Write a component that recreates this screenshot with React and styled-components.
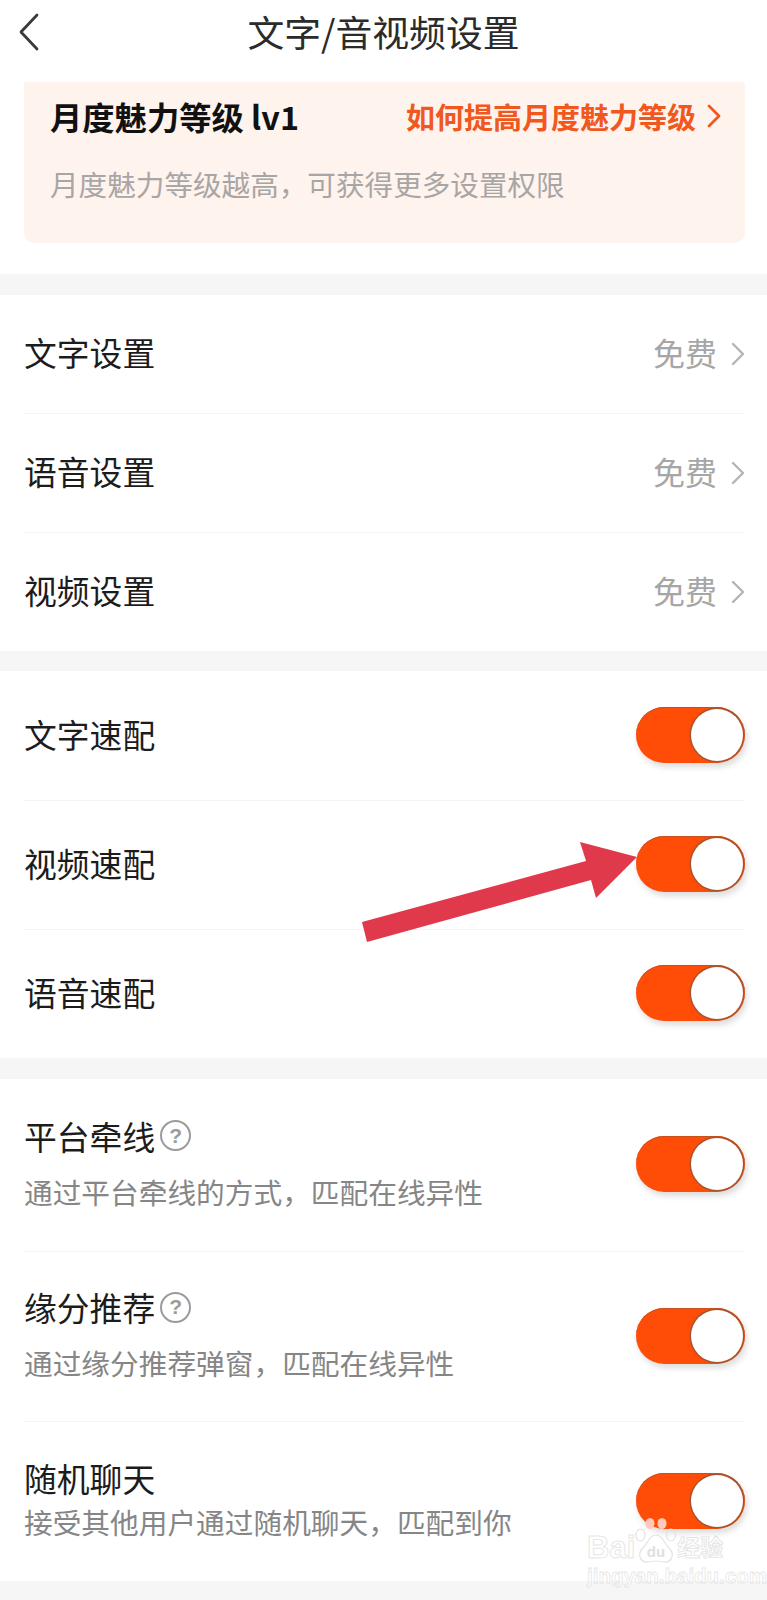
import React from "react";
import styled, { createGlobalStyle } from "styled-components";

const GlobalStyle = createGlobalStyle`
  html, body {
    margin: 0;
    padding: 0;
    background: #ffffff;
  }
  * {
    box-sizing: border-box;
  }
`;

const Page = styled.div`
  position: relative;
  width: 767px;
  height: 1600px;
  overflow: hidden;
  background: #ffffff;
  font-family: "Noto Sans CJK SC", "Liberation Sans", sans-serif;
  color: #1c1c1c;
`;

const Header = styled.header`
  height: 82px;
  display: flex;
  align-items: flex-start;
  justify-content: center;
  padding-top: 5px;
  position: relative;
`;

const BackButton = styled.button`
  position: absolute;
  left: 18px;
  top: 13px;
  width: 24px;
  height: 38px;
  padding: 0;
  border: none;
  background: none;
  color: #3a3a3a;
`;

const HeaderTitle = styled.h1`
  margin: 0;
  font-size: 36.8px;
  line-height: 52px;
  font-weight: 400;
  color: #2b2b2b;
`;

const LevelCard = styled.div`
  height: 161px;
  margin: 0 22px 31px 24px;
  padding: 12px 24px 0 26px;
  background: #fff3ee;
  border-radius: 3px 3px 10px 10px;
`;

const LevelTop = styled.div`
  display: flex;
  align-items: center;
  justify-content: space-between;
  height: 44px;
`;

const LevelName = styled.span`
  font-size: 32.3px;
  line-height: 44px;
  font-weight: 700;
  color: #111111;
`;

const LevelLink = styled.a`
  display: flex;
  align-items: center;
  gap: 11px;
  font-size: 29px;
  line-height: 44px;
  font-weight: 700;
  color: #f0581e;
`;

const LevelHint = styled.p`
  margin: 26px 0 0;
  font-size: 28.6px;
  line-height: 40px;
  color: #a8a6a5;
`;

const Band = styled.div`
  height: ${(props) => props.size || 21}px;
  background: #f6f6f6;
`;

const Section = styled.section`
  padding: 0 22px 0 24px;
`;

const Row = styled.div`
  height: ${(props) => props.height}px;
  display: flex;
  align-items: center;
  justify-content: space-between;
  border-bottom: ${(props) => (props.last ? "none" : "1px solid #f3f3f3")};
`;

const RowLabel = styled.span`
  font-size: 32.8px;
  line-height: 40px;
  color: #1c1c1c;
`;

const PlainLabel = styled(RowLabel)`
  padding-bottom: 4px;
`;

const RowValue = styled.span`
  display: flex;
  align-items: center;
  gap: 14px;
  font-size: 32px;
  line-height: 40px;
  color: #a6a6a6;
`;

const ValueText = styled.span`
  padding-bottom: 4px;
`;

const RowText = styled.div`
  display: flex;
  flex-direction: column;
  padding-bottom: 4px;
  gap: ${(props) => (props.tight ? 5 : 17)}px;
`;

const TitleLine = styled.div`
  display: flex;
  align-items: center;
  gap: 5px;
`;

const RowDesc = styled.span`
  font-size: 28.7px;
  line-height: 38px;
  color: #868686;
`;

const HelpMark = styled.span`
  width: 31px;
  height: 31px;
  display: flex;
  align-items: center;
  justify-content: center;
  border: 2px solid #9b9b9b;
  border-radius: 50%;
  font-family: "Liberation Sans", sans-serif;
  font-size: 21px;
  font-weight: 700;
  color: #9b9b9b;
`;

const Track = styled.div`
  width: 109px;
  height: 56px;
  margin-bottom: 2px;
  display: flex;
  align-items: center;
  justify-content: flex-end;
  padding-right: 2px;
  border-radius: 28px;
  background: #ff4d08;
  box-shadow: inset 0 1px 0 #c9501c, 2px 4px 6px rgba(0, 0, 0, 0.14);
`;

const Knob = styled.span`
  width: 52px;
  height: 52px;
  border-radius: 50%;
  background: #ffffff;
  box-shadow: 0 0 0 1.5px #a8532c;
`;

const ArrowMark = styled.svg`
  position: absolute;
  left: 0;
  top: 0;
  pointer-events: none;
`;

const Watermark = styled.div`
  position: absolute;
  left: 587px;
  top: 1518px;
  width: 140px;
  pointer-events: none;
`;

const BrandLine = styled.div`
  display: flex;
  align-items: flex-end;
  height: 46px;
`;

const BrandText = styled.span`
  font-family: "Liberation Sans", "Noto Sans CJK SC", sans-serif;
  font-size: ${(props) => props.size}px;
  line-height: 32px;
  font-weight: 700;
  color: rgba(255, 255, 255, 0.7);
  -webkit-text-stroke: 1px rgba(205, 205, 205, 0.5);
`;

const BrandUrl = styled.div`
  margin-top: 2px;
  font-family: "Liberation Sans", sans-serif;
  font-size: 20.5px;
  line-height: 20px;
  font-weight: 700;
  color: rgba(255, 255, 255, 0.7);
  -webkit-text-stroke: 0.8px rgba(205, 205, 205, 0.5);
  white-space: nowrap;
`;

const Chevron = ({ size = 14, height = 24, color = "#b5b5b5", weight = 2.4 }) => (
  <svg width={size} height={height} viewBox="0 0 14 24" fill="none" preserveAspectRatio="none">
    <path d="M2 2 L12 12 L2 22" stroke={color} strokeWidth={weight} strokeLinecap="round" strokeLinejoin="round" />
  </svg>
);

const Toggle = () => (
  <Track>
    <Knob />
  </Track>
);

const Paw = () => (
  <svg width="42" height="46" viewBox="0 0 42 46">
    <ellipse cx="15" cy="5.5" rx="4.5" ry="5.5" fill="#ffc9bc" />
    <ellipse cx="27" cy="5.5" rx="4.5" ry="5.5" fill="#ffc9bc" />
    <ellipse cx="5.5" cy="17" rx="4.5" ry="6" fill="none" stroke="#e2e2e2" strokeWidth="1.2" />
    <ellipse cx="36" cy="17" rx="4.5" ry="6" fill="none" stroke="#e2e2e2" strokeWidth="1.2" />
    <path
      d="M21 17 C28 17 29 26 35 31 C40 37 36 45 29 44 C25 43 17 43 13 44 C6 45 2 37 7 31 C13 26 14 17 21 17 Z"
      fill="none"
      stroke="#e2e2e2"
      strokeWidth="1.2"
    />
    <text x="21" y="39" textAnchor="middle" fontFamily="Liberation Sans, sans-serif" fontSize="15" fontWeight="700" fill="#e0e0e0">
      du
    </text>
  </svg>
);

const linkRows = [
  { id: 1, label: "文字设置", height: 119 },
  { id: 2, label: "语音设置", height: 119 },
  { id: 3, label: "视频设置", height: 118, last: true },
];

const matchRows = [
  { id: 1, label: "文字速配", height: 130 },
  { id: 2, label: "视频速配", height: 129 },
  { id: 3, label: "语音速配", height: 128, last: true },
];

const detailRows = [
  { id: 1, label: "平台牵线", desc: "通过平台牵线的方式，匹配在线异性", height: 173, help: true },
  { id: 2, label: "缘分推荐", desc: "通过缘分推荐弹窗，匹配在线异性", height: 170, help: true },
  { id: 3, label: "随机聊天", desc: "接受其他用户通过随机聊天，匹配到你", height: 159, tight: true, last: true },
];

export default function App() {
  return (
    <Page>
      <GlobalStyle />
      <Header>
        <BackButton aria-label="返回">
          <svg width="24" height="38" viewBox="0 0 24 38" fill="none">
            <path d="M19 2 L3 19 L19 36" stroke="currentColor" strokeWidth="2.8" strokeLinecap="round" strokeLinejoin="round" />
          </svg>
        </BackButton>
        <HeaderTitle>文字/音视频设置</HeaderTitle>
      </Header>

      <LevelCard>
        <LevelTop>
          <LevelName>月度魅力等级 lv1</LevelName>
          <LevelLink>
            如何提高月度魅力等级
            <Chevron size={14} height={24} color="#f0581e" weight={2.8} />
          </LevelLink>
        </LevelTop>
        <LevelHint>月度魅力等级越高，可获得更多设置权限</LevelHint>
      </LevelCard>

      <Band />
      <Section>
        {linkRows.map((row) => (
          <Row key={row.id} height={row.height} last={row.last}>
            <PlainLabel>{row.label}</PlainLabel>
            <RowValue>
              <ValueText>免费</ValueText>
              <Chevron />
            </RowValue>
          </Row>
        ))}
      </Section>

      <Band size={20} />
      <Section>
        {matchRows.map((row) => (
          <Row key={row.id} height={row.height} last={row.last}>
            <PlainLabel>{row.label}</PlainLabel>
            <Toggle />
          </Row>
        ))}
      </Section>

      <Band />
      <Section>
        {detailRows.map((row) => (
          <Row key={row.id} height={row.height} last={row.last}>
            <RowText tight={row.tight}>
              <TitleLine>
                <RowLabel>{row.label}</RowLabel>
                {row.help && <HelpMark>?</HelpMark>}
              </TitleLine>
              <RowDesc>{row.desc}</RowDesc>
            </RowText>
            <Toggle />
          </Row>
        ))}
      </Section>
      <Band size={19} />

      {/* annotation arrow pointing at the video toggle */}
      <ArrowMark width="767" height="1600" viewBox="0 0 767 1600">
        <polygon
          points="362,922 367,942 591,880 596,898 637,857 580,842 586,861"
          fill="#e0394c"
        />
      </ArrowMark>

      <Watermark>
        <BrandLine>
          <BrandText size={31}>Bai</BrandText>
          <Paw />
          <BrandText size={23}>经验</BrandText>
        </BrandLine>
        <BrandUrl>jingyan.baidu.com</BrandUrl>
      </Watermark>
    </Page>
  );
}
